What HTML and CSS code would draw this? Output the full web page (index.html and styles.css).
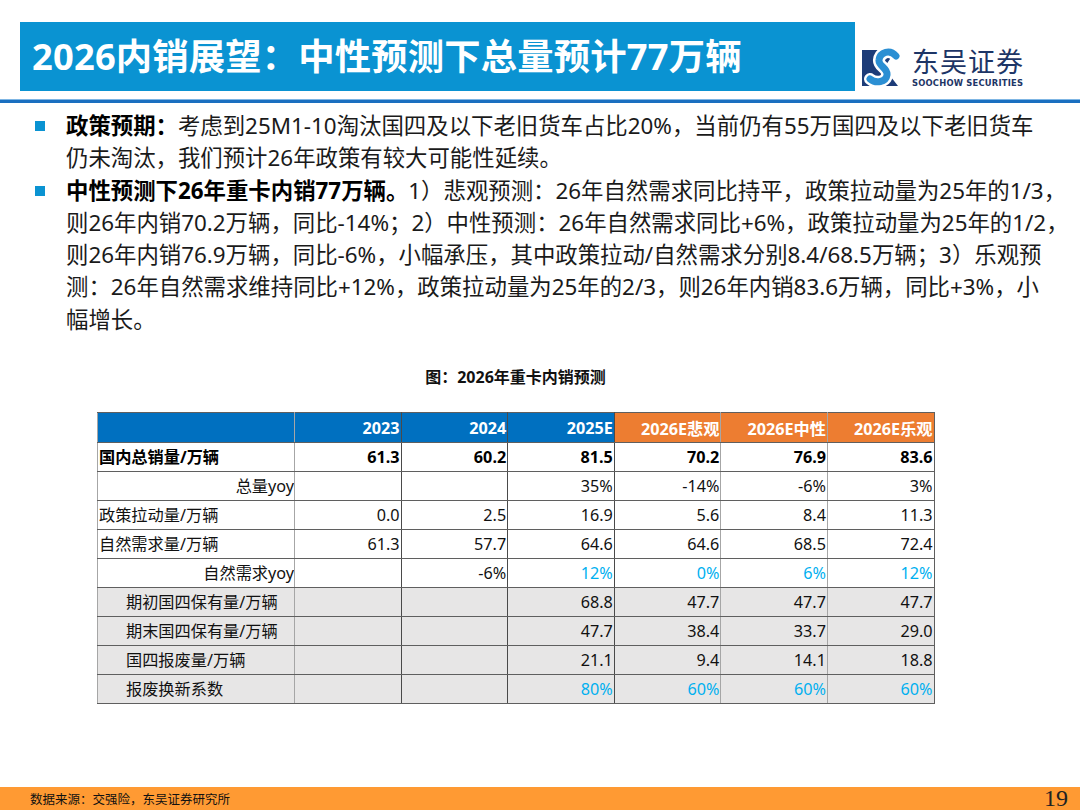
FILE: index.html
```html
<!DOCTYPE html>
<html lang="zh">
<head>
<meta charset="utf-8">
<link rel="stylesheet" href="styles.css">
</head>
<body>
<div class="slide">
  <header class="top">
    <div class="title-box"><h1>2026内销展望：中性预测下总量预计77万辆</h1></div>
    <div class="logo">
      <svg class="logo-mark" viewBox="0 0 44 38" width="44" height="38">
        <path d="M0 2H34L22 20 36 38H0Z" fill="#1d3c78"/>
        <path d="M34 8C28 1 18 4 17 12C16 18 26 20 25 27C24 34 14 36 8 31" fill="none" stroke="#ffffff" stroke-width="12" stroke-linecap="round"/>
        <path d="M34 8C28 1 18 4 17 12C16 18 26 20 25 27C24 34 14 36 8 31" fill="none" stroke="#2b8fd3" stroke-width="7" stroke-linecap="round"/>
      </svg>
      <div class="logo-text">
        <div class="logo-cn">东吴证券</div>
        <div class="logo-en">SOOCHOW SECURITIES</div>
      </div>
    </div>
  </header>
  <div class="rule"></div>

  <main class="content">
    <ul class="bullets">
      <li><b>政策预期：</b>考虑到25M1-10淘汰国四及以下老旧货车占比20%，当前仍有55万国四及以下老旧货车<br>仍未淘汰，我们预计26年政策有较大可能性延续。</li>
      <li><b>中性预测下26年重卡内销77万辆。</b>1）悲观预测：26年自然需求同比持平，政策拉动量为25年的1/3，<br>则26年内销70.2万辆，同比-14%；2）中性预测：26年自然需求同比+6%，政策拉动量为25年的1/2，<br>则26年内销76.9万辆，同比-6%，小幅承压，其中政策拉动/自然需求分别8.4/68.5万辆；3）乐观预<br>测：26年自然需求维持同比+12%，政策拉动量为25年的2/3，则26年内销83.6万辆，同比+3%，小<br>幅增长。</li>
    </ul>

    <div class="figure">
      <div class="caption">图：2026年重卡内销预测</div>
      <table class="data">
        <colgroup>
          <col class="c-label"><col class="c-num"><col class="c-num"><col class="c-num"><col class="c-num"><col class="c-num"><col class="c-num">
        </colgroup>
        <thead>
          <tr>
            <th class="blue"></th>
            <th class="blue dk">2023</th>
            <th class="blue dk">2024</th>
            <th class="blue dk">2025E</th>
            <th class="orange">2026E悲观</th>
            <th class="orange">2026E中性</th>
            <th class="orange dk-r">2026E乐观</th>
          </tr>
        </thead>
        <tbody>
          <tr class="bold">
            <td class="lbl">国内总销量/万辆</td><td class="dk">61.3</td><td class="dk">60.2</td><td class="dk">81.5</td><td>70.2</td><td>76.9</td><td class="dk-r">83.6</td>
          </tr>
          <tr>
            <td class="lbl r">总量yoy</td><td class="dk"></td><td class="dk"></td><td class="dk">35%</td><td>-14%</td><td>-6%</td><td class="dk-r">3%</td>
          </tr>
          <tr>
            <td class="lbl">政策拉动量/万辆</td><td class="dk">0.0</td><td class="dk">2.5</td><td class="dk">16.9</td><td>5.6</td><td>8.4</td><td class="dk-r">11.3</td>
          </tr>
          <tr>
            <td class="lbl">自然需求量/万辆</td><td class="dk">61.3</td><td class="dk">57.7</td><td class="dk">64.6</td><td>64.6</td><td>68.5</td><td class="dk-r">72.4</td>
          </tr>
          <tr>
            <td class="lbl r">自然需求yoy</td><td class="dk"></td><td class="dk">-6%</td><td class="dk cyan">12%</td><td class="cyan">0%</td><td class="cyan">6%</td><td class="dk-r cyan">12%</td>
          </tr>
          <tr class="gray">
            <td class="lbl ind">期初国四保有量/万辆</td><td class="dk"></td><td class="dk"></td><td class="dk">68.8</td><td>47.7</td><td>47.7</td><td class="dk-r">47.7</td>
          </tr>
          <tr class="gray">
            <td class="lbl ind">期末国四保有量/万辆</td><td class="dk"></td><td class="dk"></td><td class="dk">47.7</td><td>38.4</td><td>33.7</td><td class="dk-r">29.0</td>
          </tr>
          <tr class="gray">
            <td class="lbl ind">国四报废量/万辆</td><td class="dk"></td><td class="dk"></td><td class="dk">21.1</td><td>9.4</td><td>14.1</td><td class="dk-r">18.8</td>
          </tr>
          <tr class="gray">
            <td class="lbl ind">报废换新系数</td><td class="dk"></td><td class="dk"></td><td class="dk cyan">80%</td><td class="cyan">60%</td><td class="cyan">60%</td><td class="dk-r cyan">60%</td>
          </tr>
        </tbody>
      </table>
    </div>
  </main>

  <footer class="foot">
    <span class="source">数据来源：交强险，东吴证券研究所</span>
    <span class="page">19</span>
  </footer>
</div>
</body>
</html>
```

FILE: styles.css
```css
* { box-sizing: border-box; }
html, body { margin: 0; padding: 0; background: #ffffff; }
body {
  font-family: "Noto Sans", "Noto Sans CJK SC", sans-serif;
  color: #111;
}
.slide {
  width: 1080px;
  height: 810px;
  display: flex;
  flex-direction: column;
  overflow: hidden;
}
.top {
  display: flex;
  align-items: flex-start;
  padding: 22px 0 0 20px;
  height: 99px;
}
.title-box {
  width: 835px;
  height: 69px;
  background: #0a93d2;
  display: flex;
  align-items: center;
  padding-left: 12px;
}
.title-box h1 {
  margin: 0;
  color: #fff;
  font-size: 36.3px;
  font-weight: 700;
  letter-spacing: 0.2px;
  line-height: 1;
}
.logo {
  display: flex;
  align-items: flex-start;
  margin: 25px 0 0 7px;
  gap: 6px;
}
.logo-mark { display: block; margin-top: 1px; }
.logo-text { display: flex; flex-direction: column; }
.logo-cn {
  font-family: "Noto Sans CJK SC", sans-serif;
  font-size: 27px;
  line-height: 27px;
  height: 29px;
  color: #1d3566;
  font-weight: 400;
  letter-spacing: 1px;
}
.logo-en {
  font-family: "DejaVu Sans", sans-serif;
  font-size: 8.4px;
  line-height: 10px;
  font-weight: 700;
  color: #1d3566;
  letter-spacing: 0.2px;
  margin-top: 2px;
}
.rule {
  height: 4px;
  background: #1a6fc0;
  border-top: 1px solid #7fb6e4;
}
.content {
  flex: 1;
  padding: 7px 0 0 0;
}
.bullets {
  list-style: none;
  margin: 0;
  padding: 0 0 0 66px;
}
.bullets li {
  position: relative;
  font-size: 22.4px;
  line-height: 32.3px;
  color: #1a1a1a;
  white-space: nowrap;
}
.bullets li b { color: #000; font-weight: 700; }
.bullets li::before {
  content: "";
  position: absolute;
  left: -31px;
  top: 11px;
  width: 10px;
  height: 10px;
  background: #0a93d2;
}
.figure {
  margin-top: 30px;
  padding-left: 97px;
}
.caption {
  width: 837px;
  text-align: center;
  font-size: 16px;
  font-weight: 700;
  line-height: 22px;
  color: #111;
  margin-bottom: 24px;
}
.data {
  border-collapse: collapse;
  width: 837px;
  table-layout: fixed;
  font-size: 16.2px;
}
.c-label { width: 197px; }
.c-num { width: 106.6px; }
.data th, .data td {
  border: 1px solid #a6a6a6;
  text-align: right;
  padding: 0 1px 0 2px;
  white-space: nowrap;
  overflow: hidden;
}
.data td { border-top: 1px solid #5f5f5f; border-bottom: 1px solid #5f5f5f; }
.data th {
  height: 30px;
  color: #fff;
  font-weight: 700;
  border-top: 1px solid #5f5f5f;
  border-bottom: 1px solid #5f5f5f;
}
.data td { height: 29px; line-height: 20px; }
.data .blue { background: #0070c0; }
.data .orange { background: #ed7d31; }
.data .dk { border-right: 1px solid #4a4a4a; }
.data .dk-r { border-right: 1px solid #5f5f5f; }
.data .bold td { font-weight: 700; color: #000; }
.data .lbl { text-align: left; padding-left: 1px; }
.data .lbl.r { text-align: right; padding-right: 0; }
.data .lbl.ind { padding-left: 28px; }
.data .gray td { background: #e7e6e6; }
.data .cyan { color: #00b0f0; }
.foot {
  height: 23px;
  background: #ff9a33;
  display: flex;
  align-items: center;
  justify-content: space-between;
  padding: 0 12px 0 30px;
}
.source {
  font-size: 12.5px;
  color: #111;
}
.page {
  font-family: "Liberation Serif", serif;
  font-size: 24px;
  line-height: 23px;
  color: #222;
}
```
